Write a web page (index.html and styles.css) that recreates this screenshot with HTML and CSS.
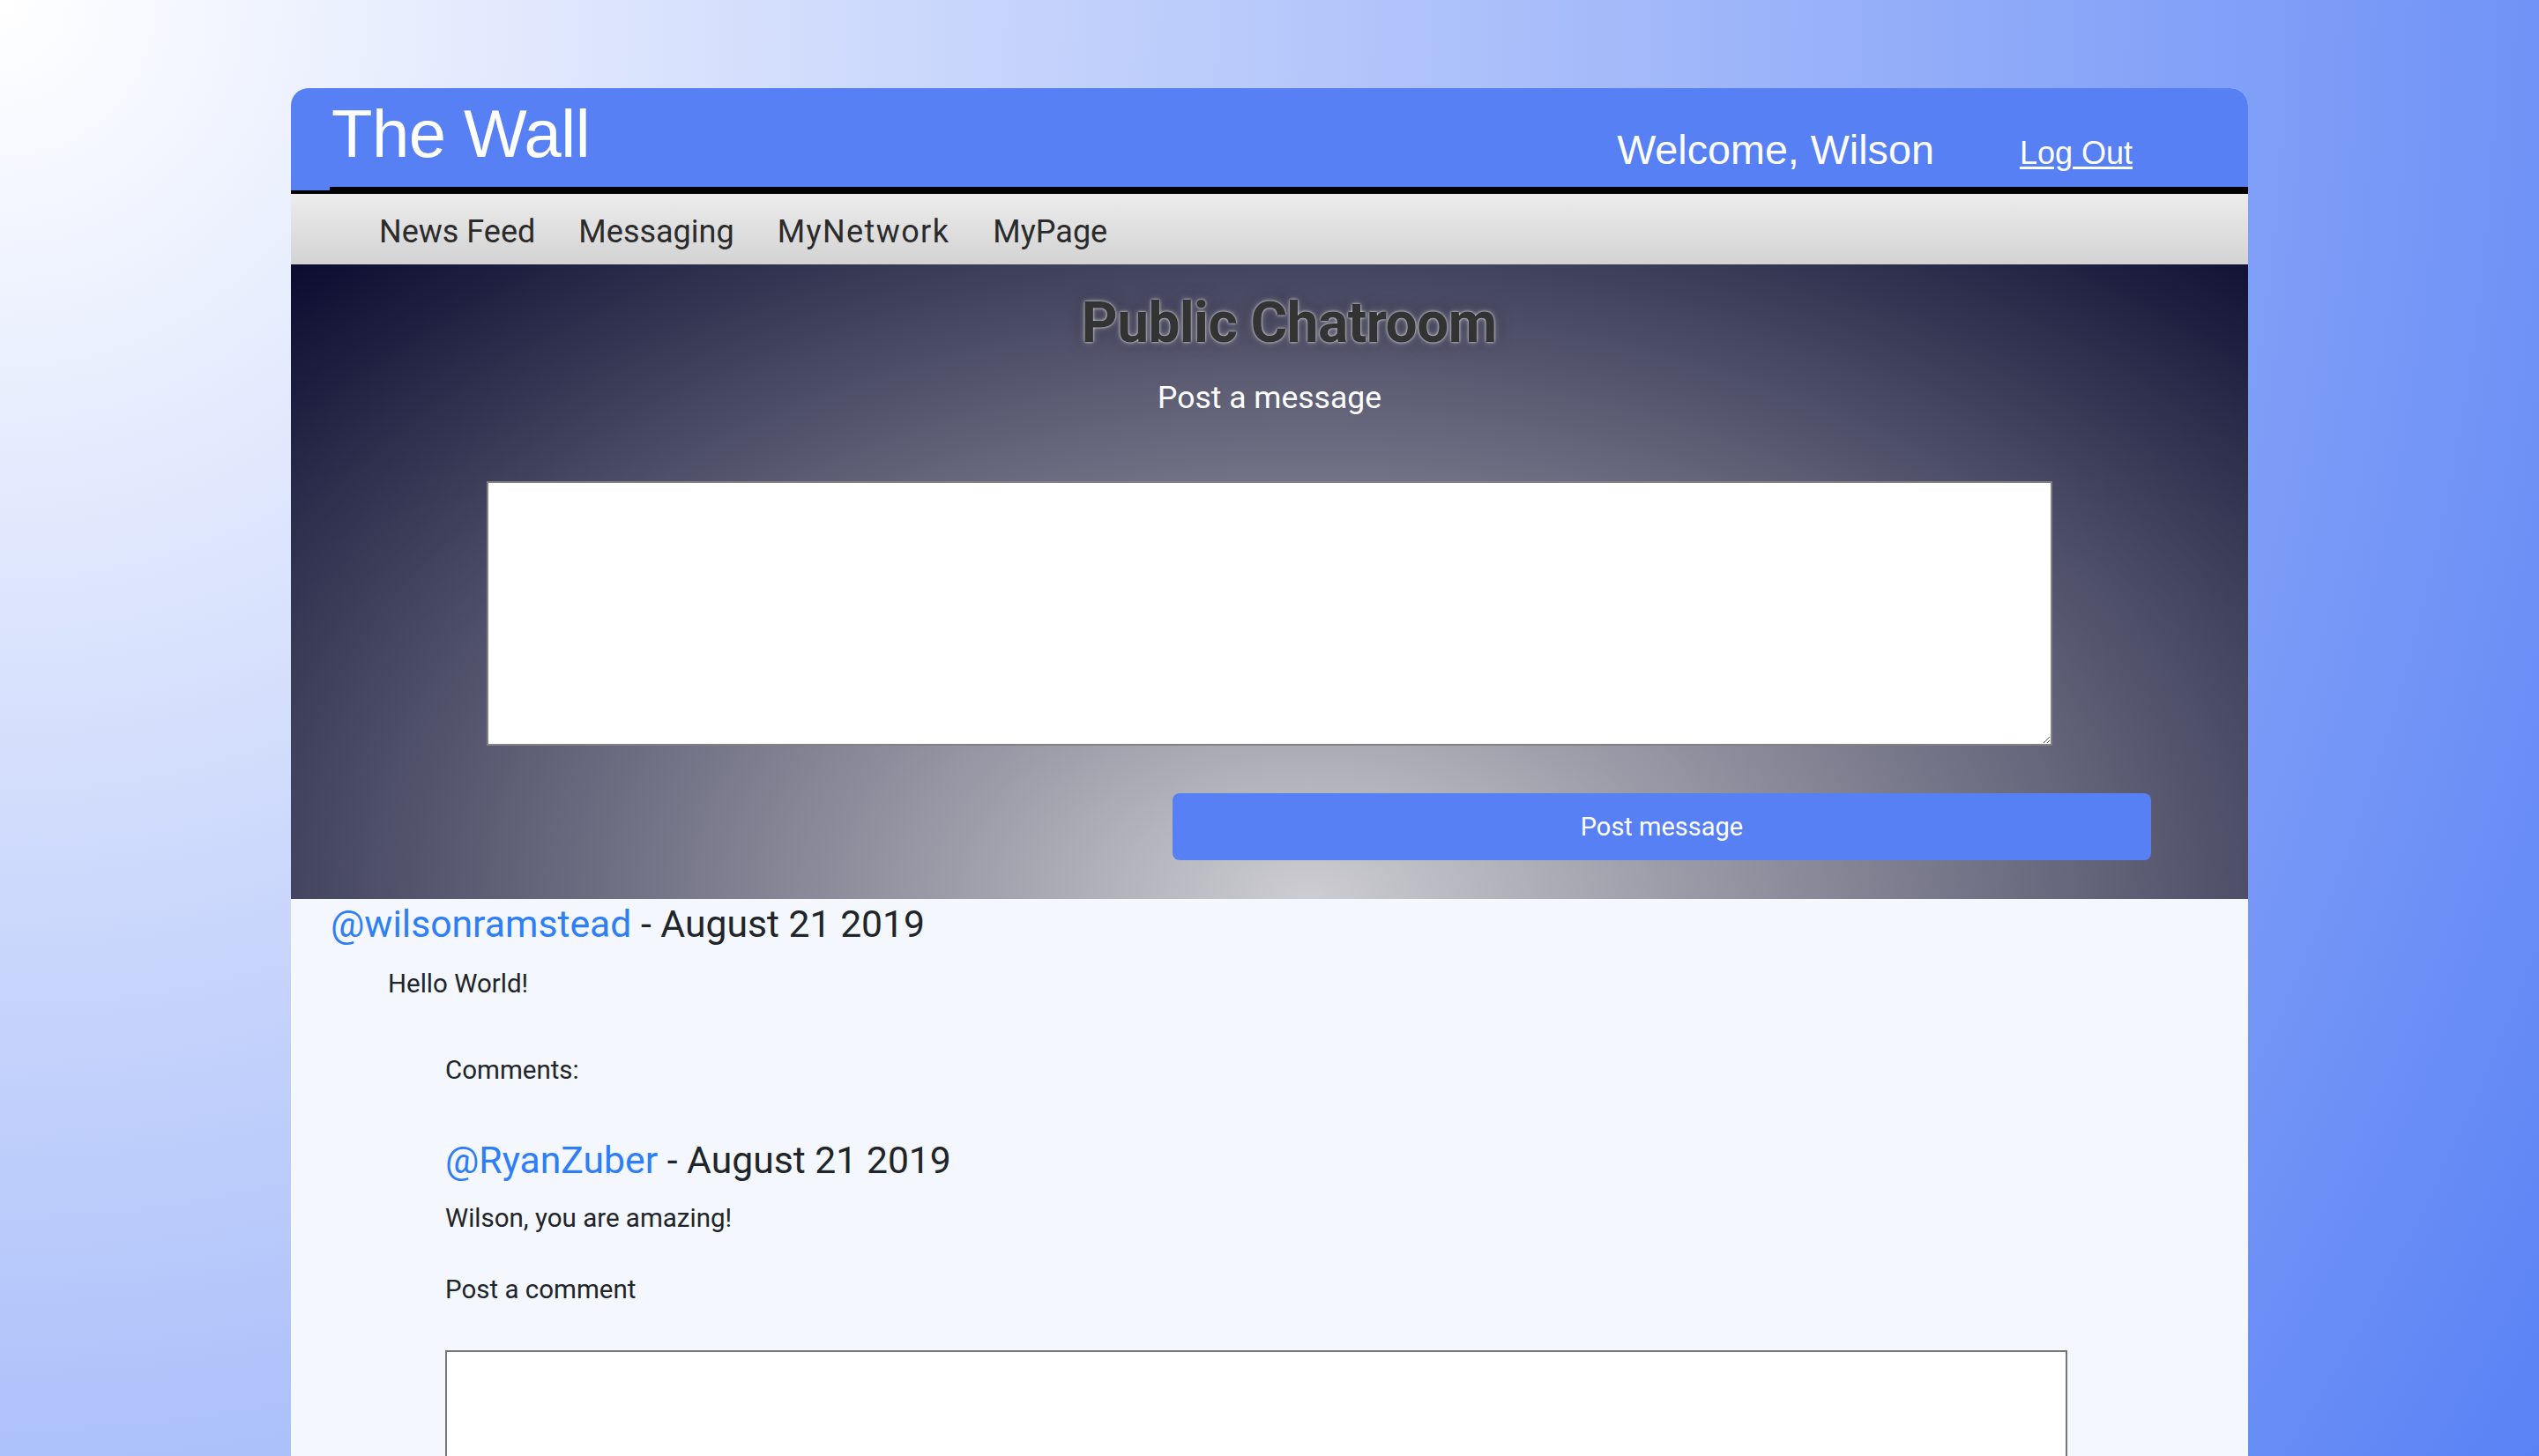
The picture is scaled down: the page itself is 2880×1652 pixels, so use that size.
FILE: index.html
```html
<!DOCTYPE html>
<html lang="en">
<head>
<meta charset="utf-8">
<title>The Wall</title>
<link rel="stylesheet" href="styles.css">
</head>
<body>
<div class="page">
  <header class="top">
    <div class="top-inner">
      <h1 class="brand">The Wall</h1>
      <div class="user">
        <span class="welcome">Welcome, Wilson</span>
        <a class="logout" href="#">Log Out</a>
      </div>
    </div>
  </header>
  <nav class="nav">
    <a href="#">News Feed</a>
    <a href="#">Messaging</a>
    <a href="#" class="wide">MyNetwork</a>
    <a href="#">MyPage</a>
  </nav>
  <section class="hero">
    <h2 class="hero-title">Public Chatroom</h2>
    <p class="hero-sub">Post a message</p>
    <textarea class="msg-box"></textarea>
    <button class="post-btn" type="button">Post message</button>
  </section>
  <section class="feed">
    <article class="post">
      <h3 class="post-head"><a href="#">@wilsonramstead</a> - August 21 2019</h3>
      <p class="post-body">Hello World!</p>
      <div class="comments">
        <p class="comments-label">Comments:</p>
        <h3 class="comment-head"><a href="#">@RyanZuber</a> - August 21 2019</h3>
        <p class="comment-body">Wilson, you are amazing!</p>
        <p class="comment-label">Post a comment</p>
        <textarea class="comment-box"></textarea>
      </div>
    </article>
  </section>
</div>
</body>
</html>
```
FILE: styles.css
```css
html, body {
  margin: 0;
  padding: 0;
}
body {
  min-height: 100vh;
  background: radial-gradient(circle at top left, #ffffff 0%, #5a82f5 100%) fixed;
  font-family: Roboto, "Liberation Sans", sans-serif;
  color: #212529;
}
.page {
  width: 2220px;
  margin: 100px auto 0;
  background: #f4f7fe;
  border-radius: 20px 20px 0 0;
  overflow: hidden;
}
.top {
  background: #5780f5;
  border-bottom: 4px solid #000;
}
.top-inner {
  display: flex;
  align-items: flex-start;
  height: 112px;
  margin-left: 44px;
  border-bottom: 4px solid #000;
}
.brand {
  margin: 14px 0 0 2px;
  font-family: "Liberation Sans", Arial, sans-serif;
  font-weight: normal;
  font-size: 76px;
  line-height: 76px;
  color: #fff;
  letter-spacing: -0.5px;
}
.user {
  margin-left: auto;
  margin-top: 47px;
  margin-right: 131px;
  display: flex;
  align-items: baseline;
  gap: 97px;
  font-family: "Liberation Sans", Arial, sans-serif;
  color: #fff;
  line-height: 47px;
}
.welcome {
  font-size: 46.7px;
}
.logout {
  font-size: 36px;
  color: #fff;
  text-decoration: underline;
  text-underline-offset: 3px;
}
.nav {
  box-sizing: border-box;
  height: 80px;
  display: flex;
  align-items: center;
  gap: 49px;
  padding: 6px 0 0 100px;
  background: linear-gradient(#ececec, #d3d3d3);
}
.nav a {
  font-size: 36px;
  color: #2b2b2b;
  text-decoration: none;
}
.nav a.wide {
  letter-spacing: 1.4px;
}
.hero {
  box-sizing: border-box;
  height: 720px;
  padding-top: 27px;
  background: radial-gradient(ellipse farthest-corner at 52% 100%, #cdcdd2 0%, #0a0b2f 100%);
}
.hero-title {
  margin: 0;
  padding-left: 44px;
  text-align: center;
  font-size: 64px;
  font-weight: 700;
  line-height: 80px;
  color: #333;
  letter-spacing: -0.6px;
  text-shadow: 0 0 3px rgba(255, 255, 255, 0.95), 0 0 8px rgba(255, 255, 255, 0.35), 0 0 20px rgba(0, 0, 0, 0.35);
}
.hero-sub {
  margin: 22px 0 0;
  text-align: center;
  font-size: 35.5px;
  line-height: 44px;
  color: #fff;
}
.msg-box {
  display: block;
  box-sizing: border-box;
  width: 1776px;
  height: 300px;
  margin: 73px auto 0;
  border: 2px solid #828282;
  background: #fff;
  resize: both;
}
.post-btn {
  display: block;
  width: 1110px;
  height: 76px;
  margin: 54px 0 0 1000px;
  border: none;
  border-radius: 8px;
  background: #5780f5;
  color: #fff;
  font-family: Roboto, "Liberation Sans", sans-serif;
  font-size: 29px;
}
.feed {
  padding: 2px 0 120px 45px;
}
.post-head,
.comment-head {
  margin: 0;
  font-size: 42.7px;
  font-weight: normal;
  line-height: 52px;
  color: #212529;
}
.post-head a,
.comment-head a {
  color: #2e7ef6;
  text-decoration: none;
}
.post-body {
  margin: 24px 0 0 65px;
  font-size: 29.5px;
  line-height: 36px;
}
.comments {
  padding-left: 130px;
}
.comments-label {
  margin: 62px 0 0;
  font-size: 29.5px;
  line-height: 36px;
}
.comment-head {
  margin-top: 58px;
}
.comment-body {
  margin: 22px 0 0;
  font-size: 29.5px;
  line-height: 36px;
}
.comment-label {
  margin: 45px 0 0;
  font-size: 29.5px;
  line-height: 36px;
}
.comment-box {
  display: block;
  box-sizing: border-box;
  width: 1840px;
  height: 300px;
  margin-top: 51px;
  border: 2px solid #777;
  background: #fff;
}
```
